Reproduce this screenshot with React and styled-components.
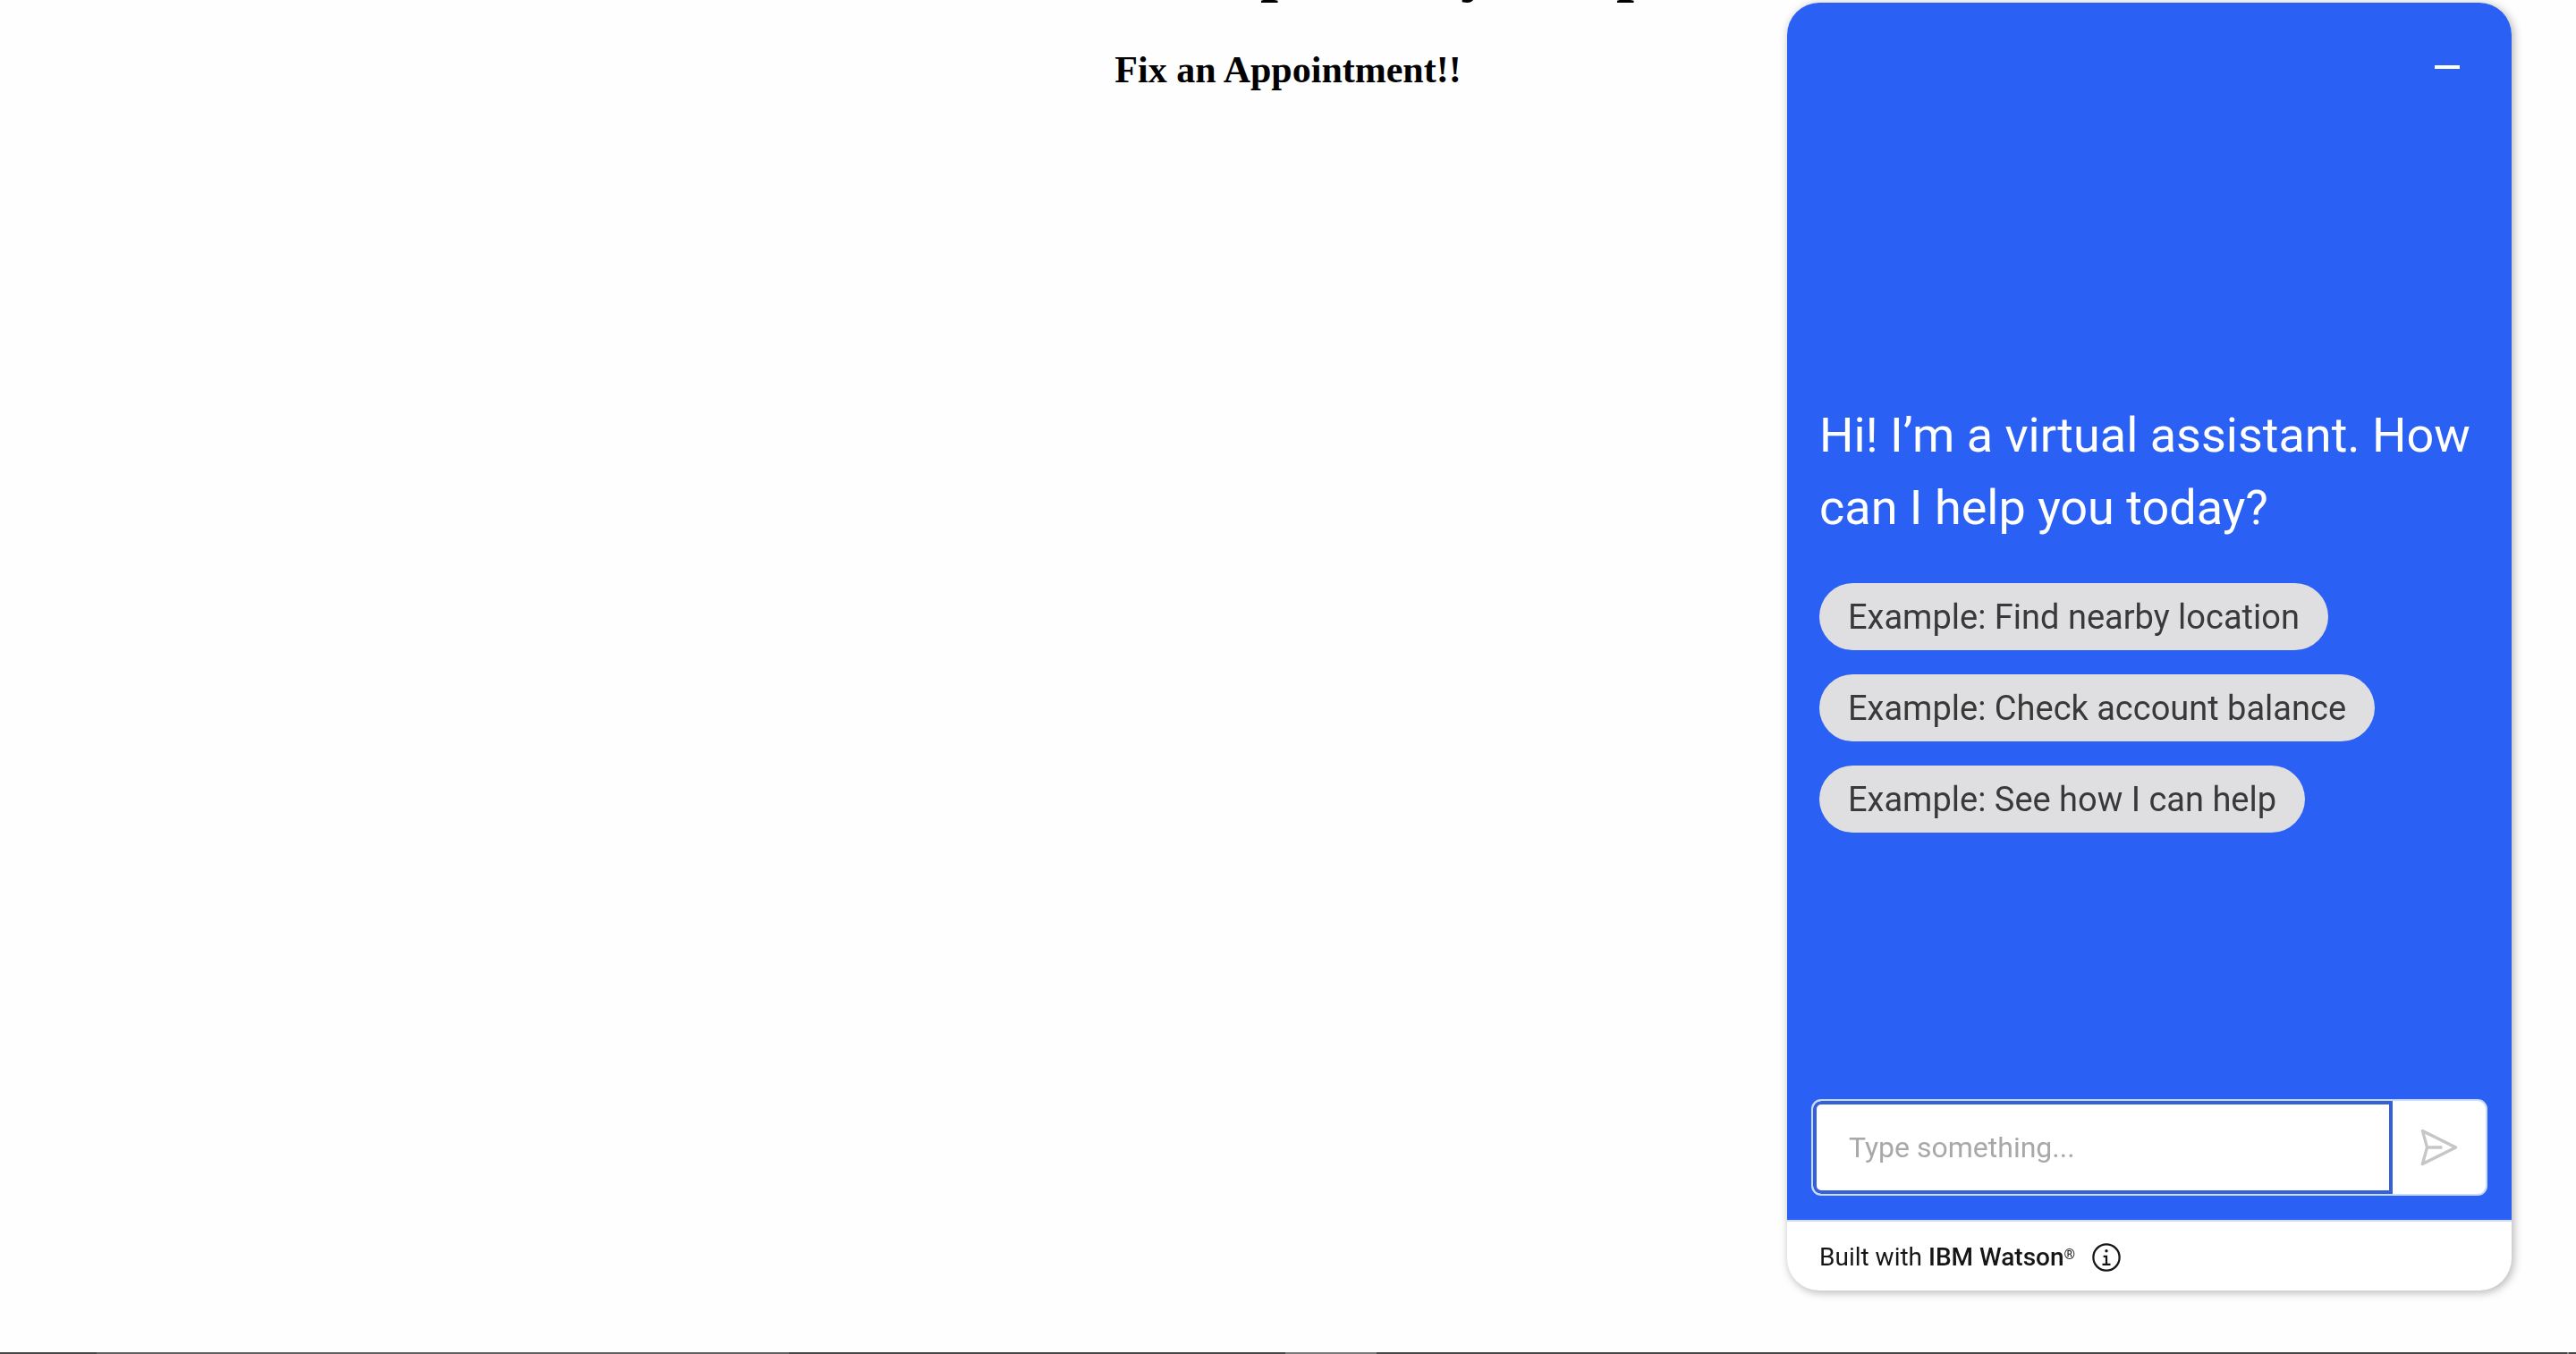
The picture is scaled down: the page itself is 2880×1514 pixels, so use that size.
import React, { useState } from "react";
import styled, { createGlobalStyle } from "styled-components";

const GlobalStyle = createGlobalStyle`
  *, *::before, *::after { box-sizing: border-box; }
  html, body, #root { height: 100%; }
  body { margin: 0; background: #fefefe; color: #000; overflow: hidden; }
`;

const Page = styled.div`
  display: flex;
  flex-direction: column;
  height: 100%;
  overflow: hidden;
  font-family: "Liberation Serif", "Times New Roman", serif;
`;

const Content = styled.main`
  flex: 1;
  display: flex;
  flex-direction: column;
  align-items: center;
  gap: 50px;
  text-align: center;
`;

const Title = styled.h1`
  margin: -76px 0 0;
  font-size: 72px;
  line-height: 80px;
  white-space: nowrap;
`;

const Subtitle = styled.h3`
  margin: 0;
  font-size: 42px;
  line-height: 48px;
`;

const Taskbar = styled.div`
  display: flex;
  height: 2px;
  background: #474747;
`;

const TaskSegment = styled.span`
  flex: ${(p) => p.$span} 0 0;
  background: ${(p) => p.$tone};
`;

const Widget = styled.aside`
  position: fixed;
  top: 3px;
  right: 72px;
  bottom: 71px;
  width: 810px;
  display: flex;
  flex-direction: column;
  overflow: hidden;
  border-radius: 36px;
  background: #fff;
  box-shadow: 2px 2px 10px 1px rgba(0, 0, 0, 0.26);
  font-family: Roboto, "Noto Sans", sans-serif;
`;

const Home = styled.section`
  flex: 1;
  display: flex;
  flex-direction: column;
  padding: 36px 27px 27px;
  background: #2b60f4;
  border-bottom: 2px solid #cfdcf6;
`;

const WidgetHeader = styled.header`
  display: flex;
  justify-content: flex-end;
  padding-right: 9px;
`;

const IconButton = styled.button`
  display: flex;
  align-items: center;
  justify-content: center;
  width: ${(p) => p.$size}px;
  height: ${(p) => p.$size}px;
  padding: 0;
  border: 0;
  background: transparent;
  color: ${(p) => p.$color};
`;

const Welcome = styled.div`
  flex: 1;
  display: flex;
  flex-direction: column;
  justify-content: center;
  gap: 44px;
  padding: 36px 9px 0;
`;

const Greeting = styled.h2`
  margin: 0;
  color: #fff;
  font-size: 54px;
  font-weight: 400;
  line-height: 81px;
`;

const Starters = styled.div`
  display: flex;
  flex-direction: column;
  align-items: flex-start;
  gap: 27px;
`;

const Starter = styled.button`
  height: 75px;
  padding: 2px 32px 0;
  border: 0;
  border-radius: 38px;
  background: #dfdfe1;
  color: #393939;
  font-family: inherit;
  font-size: 38px;
  line-height: 48px;
  white-space: nowrap;
`;

const Composer = styled.form`
  display: flex;
  height: 108px;
  overflow: hidden;
  border: 2px solid #c8dcfb;
  border-radius: 11px;
  background: #fff;
`;

const MessageInput = styled.input`
  flex: 1;
  min-width: 0;
  padding: 0 36px;
  border: 4px solid #3560d8;
  border-radius: 9px 0 0 9px;
  outline: 0;
  background: #fff;
  color: #161616;
  font-family: inherit;
  font-size: 32px;
  &::placeholder { color: #a8a8a8; opacity: 1; }
`;

const SendButton = styled(IconButton)`
  height: 100%;
`;

const Footer = styled.footer`
  display: flex;
  align-items: center;
  gap: 17px;
  height: 77px;
  padding: 2px 36px 0;
  color: #161616;
  font-size: 28px;
  line-height: 36px;
`;

const Brand = styled.strong`
  font-weight: 500;
`;

const Registered = styled.span`
  font-size: 16px;
  line-height: 16px;
  vertical-align: 7px;
`;

const tasks = [
  { span: 108, tone: "#474747" },
  { span: 774, tone: "#606060" },
  { span: 555, tone: "#474747" },
  { span: 102, tone: "#7a7a7a" },
  { span: 1331, tone: "#474747" },
  { span: 2, tone: "#8a8a8a" },
  { span: 8, tone: "#474747" },
];

const starters = ["Find nearby location", "Check account balance", "See how I can help"];

const MinimizeIcon = () => (
  <svg width="28" height="4" viewBox="0 0 28 4" aria-hidden="true">
    <rect width="28" height="4" fill="currentColor" />
  </svg>
);

const SendIcon = () => (
  <svg width="54" height="54" viewBox="0 0 32 32" fill="currentColor" aria-hidden="true">
    <path d="M27.45,15.11l-22-11a1,1,0,0,0-1.08.12,1,1,0,0,0-.33,1L7,16,4,26.74A1,1,0,0,0,5,28a1,1,0,0,0,.45-.11l22-11a1,1,0,0,0,0-1.78Zm-20.9,10L8.76,17H18V15H8.76L6.55,6.89,24.76,16Z" />
  </svg>
);

const InfoIcon = () => (
  <svg width="36" height="36" viewBox="0 0 32 32" fill="currentColor" aria-hidden="true">
    <path d="M17 22L17 14 13 14 13 16 15 16 15 22 12 22 12 24 20 24 20 22 17 22zM16 8a1.5,1.5,0,1,0,1.5,1.5A1.5,1.5,0,0,0,16,8z" />
    <path d="M16,30A14,14,0,1,1,30,16,14,14,0,0,1,16,30ZM16,4A12,12,0,1,0,28,16,12,12,0,0,0,16,4Z" />
  </svg>
);

export default function App() {
  const [message, setMessage] = useState("");

  return (
    <Page>
      <GlobalStyle />
      <Content>
        <Title>Medica Multi Speciality Hospital</Title>
        <Subtitle>Fix an Appointment!!</Subtitle>
      </Content>
      <Taskbar>
        {tasks.map((task, i) => (
          <TaskSegment key={i} $span={task.span} $tone={task.tone} />
        ))}
      </Taskbar>
      <Widget aria-label="Virtual assistant">
        <Home>
          <WidgetHeader>
            <IconButton type="button" $size={72} $color="#fff" aria-label="Minimize">
              <MinimizeIcon />
            </IconButton>
          </WidgetHeader>
          <Welcome>
            <Greeting>Hi! I’m a virtual assistant. How can I help you today?</Greeting>
            <Starters>
              {starters.map((text) => (
                <Starter key={text} type="button" onClick={() => setMessage(text)}>
                  Example: {text}
                </Starter>
              ))}
            </Starters>
          </Welcome>
          <Composer onSubmit={(e) => e.preventDefault()}>
            <MessageInput
              aria-label="Message"
              placeholder="Type something..."
              value={message}
              onChange={(e) => setMessage(e.target.value)}
            />
            <SendButton type="submit" $size={104} $color="#c6c6c6" aria-label="Send">
              <SendIcon />
            </SendButton>
          </Composer>
        </Home>
        <Footer>
          <span>
            Built with <Brand>IBM Watson</Brand>
            <Registered>®</Registered>
          </span>
          <IconButton type="button" $size={36} $color="#161616" aria-label="Information">
            <InfoIcon />
          </IconButton>
        </Footer>
      </Widget>
    </Page>
  );
}
